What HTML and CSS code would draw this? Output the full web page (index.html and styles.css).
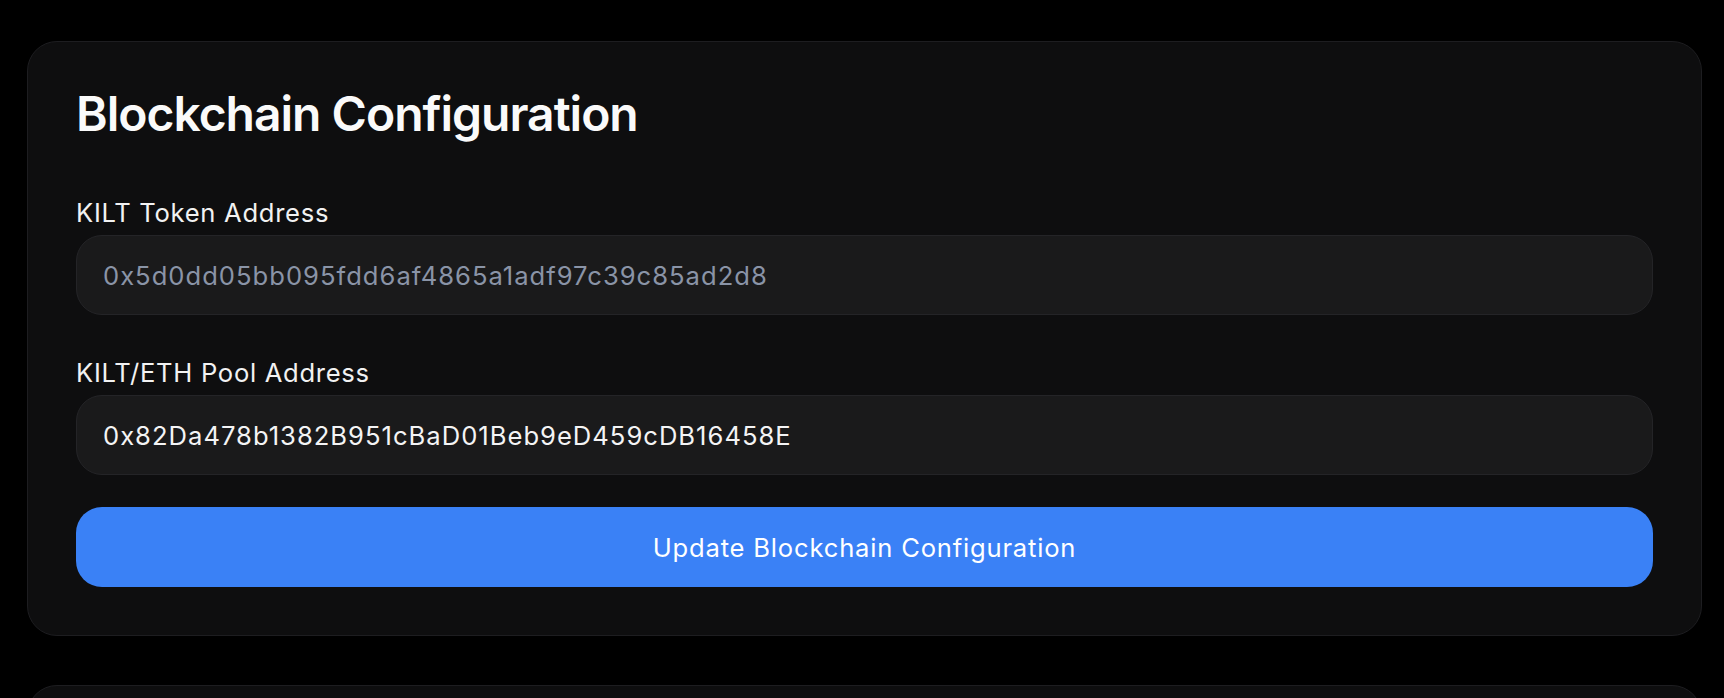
FILE: index.html
```html
<!DOCTYPE html>
<html lang="en">
<head>
<meta charset="utf-8">
<title>Blockchain Configuration</title>
<link rel="stylesheet" href="styles.css">
</head>
<body>
<main class="page">
  <section class="card">
    <h2 class="card-title">Blockchain Configuration</h2>
    <div class="field">
      <label class="field-label" for="token">KILT Token Address</label>
      <input class="field-input is-disabled" id="token" type="text" value="0x5d0dd05bb095fdd6af4865a1adf97c39c85ad2d8" disabled>
    </div>
    <div class="field">
      <label class="field-label" for="pool">KILT/ETH Pool Address</label>
      <input class="field-input" id="pool" type="text" value="0x82Da478b1382B951cBaD01Beb9eD459cDB16458E">
    </div>
    <button class="primary-btn" type="button">Update Blockchain Configuration</button>
  </section>
  <section class="card card-next"></section>
</main>
</body>
</html>
```

FILE: styles.css
```css
html, body {
  margin: 0;
  padding: 0;
  background: #000;
  font-family: "Inter", "Noto Sans", "Liberation Sans", sans-serif;
  color: #fafafa;
  overflow: hidden;
}

.page {
  display: flex;
  flex-direction: column;
  gap: 49px;
  padding: 41px 22px 0 27px;
}

.card {
  background: #0e0e0f;
  border: 1px solid #1d1d20;
  border-radius: 30px;
  padding: 43px 48px 48px;
  display: flex;
  flex-direction: column;
}

.card-next {
  min-height: 300px;
}

.card-title {
  margin: 0 0 52px;
  font-size: 48px;
  line-height: 58px;
  font-weight: 600;
  color: #fafafa;
  letter-spacing: -1px;
}

.field {
  display: flex;
  flex-direction: column;
  gap: 4px;
  margin-bottom: 40px;
}

.field:last-of-type {
  margin-bottom: 32px;
}

.field-label {
  font-size: 25.6px;
  line-height: 36px;
  font-weight: 400;
  letter-spacing: 0.7px;
  color: #f2f2f2;
}

.field-input {
  box-sizing: border-box;
  height: 80px;
  width: 100%;
  background: #1a1a1b;
  border: 1px solid #242427;
  border-radius: 26px;
  padding: 0 26px;
  font-family: inherit;
  font-size: 25.6px;
  letter-spacing: 1px;
  color: #f4f4f5;
  outline: none;
}

.field-input.is-disabled {
  color: #8a94a7;
  -webkit-text-fill-color: #8a94a7;
  opacity: 1;
}

.primary-btn {
  height: 80px;
  border: none;
  border-radius: 26px;
  background: #3a81f6;
  color: #ffffff;
  font-family: inherit;
  font-size: 25.6px;
  font-weight: 400;
  letter-spacing: 0.8px;
  cursor: pointer;
}
```
